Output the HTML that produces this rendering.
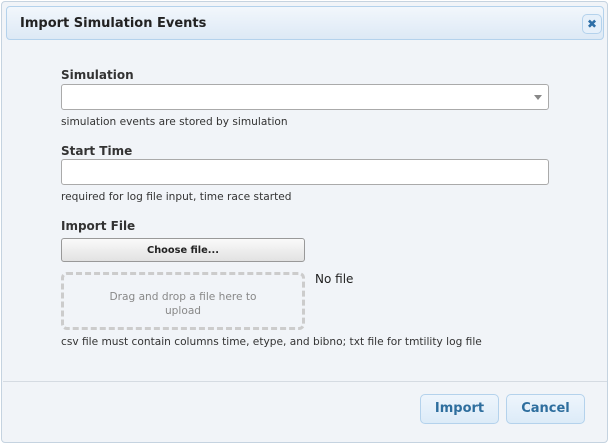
<!DOCTYPE html>
<html><head><style>
*{box-sizing:border-box;margin:0;padding:0}
body{width:610px;height:444px;background:#fff;font-family:"DejaVu Sans","Liberation Sans",sans-serif;position:relative;overflow:hidden}
.dlg{position:absolute;left:1px;top:1px;width:607px;height:442px;border:1px solid #c5d3e0;border-radius:4px;background:#f1f4f8}
.tb{position:absolute;left:4px;top:4px;width:598px;height:34px;border:1px solid #b4d2ec;border-radius:4px;background:linear-gradient(#f2f7fc,#dde9f5)}
.tb span{position:absolute;left:13px;top:9px;font-size:13px;font-weight:bold;color:#222}
.x{position:absolute;right:1px;top:7px;width:20px;height:20px;border:1px solid #b4d2ec;border-radius:5px;background:#e6f0fa;color:#2e6fa7;font-size:12px;font-weight:bold;text-align:center;line-height:18px}
.a{position:absolute}
.lbl{font-size:12px;font-weight:bold;color:#333}
.hint{font-size:10.6px;color:#333}
.inp{background:#fff;border:1px solid #aaa;border-radius:3px;height:26px}
.btn{border:1px solid #b4d2ec;border-radius:5px;background:linear-gradient(#eef5fc,#dcebf8);color:#2e6e9e;font-weight:bold;font-size:13px;text-align:center;line-height:28px;height:30px}
</style></head><body>
<div class="dlg">
<div class="tb"><span>Import Simulation Events</span><div class="x">✖</div></div>
</div>
<div class="a lbl" style="left:61px;top:68px">Simulation</div>
<div class="a inp" style="left:61px;top:84px;width:488px"></div>
<div class="a" style="left:534px;top:95px;border-left:4px solid transparent;border-right:4px solid transparent;border-top:5px solid #888"></div>
<div class="a hint" style="left:61px;top:116px">simulation events are stored by simulation</div>
<div class="a lbl" style="left:61px;top:144px">Start Time</div>
<div class="a inp" style="left:61px;top:159px;width:488px"></div>
<div class="a hint" style="left:61px;top:191px">required for log file input, time race started</div>
<div class="a lbl" style="left:61px;top:219px">Import File</div>
<div class="a" style="left:61px;top:238px;width:244px;height:24px;border:1px solid #999;border-radius:3px;background:linear-gradient(#fafafa,#e2e2e2);font-size:9.8px;font-weight:bold;text-align:center;line-height:23px;color:#222">Choose file...</div>
<div class="a" style="left:61px;top:272px;width:244px;height:58px;border:3px dashed #ccc;border-radius:6px;font-size:10.6px;color:#888;text-align:center;padding-top:15px;line-height:14px">Drag and drop a file here to<br>upload</div>
<div class="a" style="left:315px;top:272px;font-size:12px;color:#222">No file</div>
<div class="a hint" style="left:61px;top:336px">csv file must contain columns time, etype, and bibno; txt file for tmtility log file</div>
<div class="a" style="left:3px;top:381px;width:604px;border-top:1px solid #d5dbe2"></div>
<div class="a btn" style="left:420px;top:394px;width:79px">Import</div>
<div class="a btn" style="left:506px;top:394px;width:79px">Cancel</div>
</body></html>
